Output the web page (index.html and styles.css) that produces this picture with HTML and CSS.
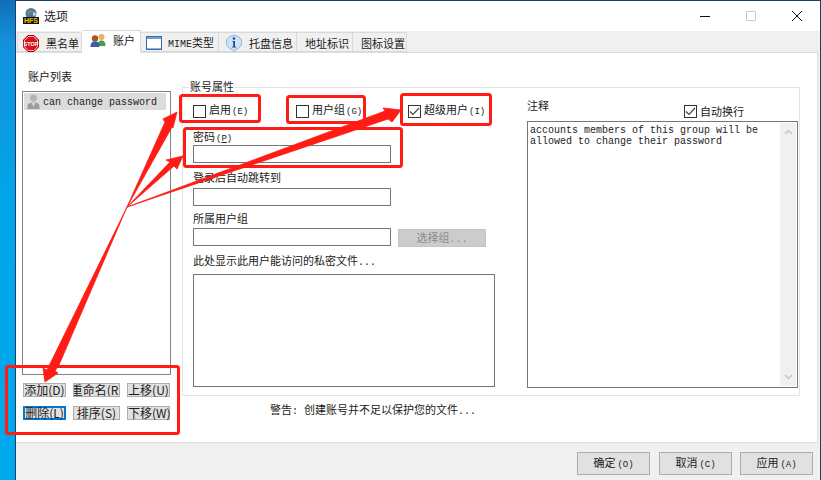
FILE: index.html
```html
<!DOCTYPE html>
<html lang="zh">
<head>
<meta charset="utf-8">
<title>选项</title>
<link rel="stylesheet" href="styles.css">
</head>
<body>
<div class="desktop">
  <div class="wallpaper"></div>
  <div class="window">
    <header class="titlebar">
      <svg class="logo" viewBox="0 0 16 16" width="16" height="16">
        <circle cx="8" cy="5.5" r="5.5" fill="#4a76a8"/>
        <path d="M3 5c2-3 5-4 7-3 1 2-2 2-3 4-2 1-3 0-4-1z" fill="#7d8b5c"/>
        <path d="M10 4c2 0 3 1 3 3l-3 1z" fill="#d8d8d8"/>
        <rect x="0" y="9" width="16" height="7" fill="#111"/>
        <text x="8" y="15" class="logo-text">HFS</text>
      </svg>
      <span class="title">选项</span>
      <div class="controls">
        <svg width="12" height="12" viewBox="0 0 12 12"><path d="M1 6.5h10" stroke="#111" fill="none"/></svg>
        <svg width="12" height="12" viewBox="0 0 12 12"><path d="M1.5 1.5h9v9h-9z" stroke="#ccc" fill="none"/></svg>
        <svg width="12" height="12" viewBox="0 0 12 12"><path d="M1 1l10 10M11 1L1 11" stroke="#111" fill="none"/></svg>
      </div>
    </header>

    <nav class="tabs">
      <div class="tab t-block">
        <svg width="16" height="17" viewBox="0 0 16 17"><path d="M5 .5h6L15.5 5v7L11 16.500H5L.5 12V5z" fill="#d9101c" stroke="#a00"/><path d="M5.400 1.500h5.200l3.900 3.900v6.200l-3.900 3.900H5.400l-3.900-3.900V5.400z" fill="none" stroke="#fff" stroke-opacity=".7"/><text x="8" y="11" class="stop-text">STOP</text></svg>
        <span>黑名单</span>
      </div>
      <div class="tab tab-active t-acct">
        <svg width="16" height="13" viewBox="0 0 16 13"><circle cx="11.500" cy="3" r="3" fill="#e8b060"/><path d="M7.500 12c0-4 1.500-5.500 4-5.500s4 1.500 4 5.500z" fill="#4a9a50"/><circle cx="5" cy="4.500" r="3.200" fill="#a05828"/><path d="M.5 13c0-4 1.500-5.500 4.500-5.500s4.500 1.500 4.500 5.500z" fill="#3a5ca8"/></svg>
        <span>账户</span>
      </div>
      <div class="tab t-mime">
        <svg width="16" height="14" viewBox="0 0 16 14"><rect x=".5" y=".5" width="15" height="13" fill="#fff" stroke="#2f6cb8"/><rect x="1" y="1" width="14" height="2" fill="#6f9fd8"/><path d="M1 12.500h14" stroke="#8fb4e0"/></svg>
        <span class="mime"><i class="mono">MIME</i>类型</span>
      </div>
      <div class="tab t-tray">
        <svg width="16" height="17" viewBox="0 0 16 17"><path d="M8 .5a7.500 7 0 0 1 2 13.800L8 16.500 6 14.300A7.500 7 0 0 1 8 .5z" fill="#cfe3f6" stroke="#8db2d8"/><circle cx="8" cy="3.500" r="1.300" fill="#1c4f9c"/><path d="M6.500 6h2.500v5.500h1v1H6.200v-1h1V7H6.500z" fill="#1c4f9c"/></svg>
        <span>托盘信息</span>
      </div>
      <div class="tab t-addr"><span>地址标识</span></div>
      <div class="tab t-icon"><span>图标设置</span></div>
    </nav>

    <main class="panel">
      <section class="accounts">
        <div class="label">账户列表</div>
        <div class="list">
          <div class="list-row">
            <svg width="13" height="15" viewBox="0 0 13 15"><circle cx="6.500" cy="4" r="3.500" fill="#b5b5b5"/><path d="M.5 15v-3c0-2.500 3-3.500 6-3.500s6 1 6 3.500v3z" fill="#9c9c9c"/><path d="M5 9l1.500 4L8 9z" fill="#e4e4e4"/></svg>
            <span class="mono row-text">can change password</span>
          </div>
        </div>
        <div class="list-buttons">
          <button class="sm">添加(D)</button>
          <button class="sm clip">重命名(R)</button>
          <button class="sm">上移(U)</button>
          <button class="sm sm-focus">删除(L)</button>
          <button class="sm">排序(S)</button>
          <button class="sm">下移(W)</button>
        </div>
      </section>

      <section class="props">
        <div class="group">
          <div class="legend">账号属性</div>
          <div class="group-body">
            <div class="form">
              <div class="checks">
                <label class="check c1"><span class="box"></span><span>启用<i class="mono-s">(E)</i></span></label>
                <label class="check c2"><span class="box"></span><span>用户组<i class="mono-s">(G)</i></span></label>
                <label class="check"><span class="box"><svg width="11" height="11" viewBox="0 0 11 11"><path d="M1 5.500l3 3L10 2" fill="none" stroke="#444" stroke-width="1.200"/></svg></span><span>超级用户<i class="mono-s">(I)</i></span></label>
              </div>
              <div class="label f-pass">密码<i class="mono-s">(<u>P</u>)</i></div>
              <div class="input"></div>
              <div class="label f-login">登录后自动跳转到</div>
              <div class="input"></div>
              <div class="label f-group">所属用户组</div>
              <div class="input-row">
                <div class="input"></div>
                <button class="choose">选择组<i class="mono">...</i></button>
              </div>
              <div class="label f-files">此处显示此用户能访问的私密文件<i class="mono dots">...</i></div>
              <div class="files"></div>
            </div>
            <div class="notes">
              <div class="notes-head">
                <span class="label">注释</span>
                <label class="check wrap"><span class="box"><svg width="11" height="11" viewBox="0 0 11 11"><path d="M1 5.500l3 3L10 2" fill="none" stroke="#444" stroke-width="1.200"/></svg></span><span>自动换行</span></label>
              </div>
              <div class="textarea">
                <div class="note-text mono">accounts members of this group will be allowed to change their password</div>
                <div class="scroll">
                  <svg width="9" height="6" viewBox="0 0 9 6"><path d="M1 5l3.500-3.500L8 5" fill="none" stroke="#c4c4c4" stroke-width="1.500"/></svg>
                  <svg width="9" height="6" viewBox="0 0 9 6"><path d="M1 1l3.500 3.500L8 1" fill="none" stroke="#c4c4c4" stroke-width="1.500"/></svg>
                </div>
              </div>
            </div>
          </div>
        </div>
        <div class="warning">警告<i class="mono dots">: </i>创建账号并不足以保护您的文件<i class="mono dots">...</i></div>
      </section>
    </main>

    <footer class="footer">
      <button class="btn">确定<i class="mono-s">(O)</i></button>
      <button class="btn">取消<i class="mono-s">(C)</i></button>
      <button class="btn">应用<i class="mono-s">(A)</i></button>
    </footer>
  </div>

  <svg class="marks" width="821" height="480" viewBox="0 0 821 480">
    <g fill="none" stroke="#ff1c14" stroke-width="3">
      <rect x="180.500" y="95.500" width="79" height="26" rx="2"/>
      <rect x="287.500" y="96.500" width="77" height="26" rx="2"/>
      <rect x="401.500" y="94.500" width="89" height="30" rx="2"/>
      <rect x="184.500" y="128.500" width="217" height="38" rx="2"/>
      <rect x="6.500" y="366.500" width="172" height="67" rx="2"/>
    </g>
    <g fill="#ff1c14" stroke="#ff1c14" stroke-width=".8">
      <path d="M127 207L165 122L163 119L177 112L173 128L172 127z"/>
      <path d="M127 207L170 162L166 160L183 156L177 169L174 166z"/>
      <path d="M127 207L385 111L383 108L401 110L392 122L388 119z"/>
      <path d="M127 207L59 365L55 371L58 373L45 382L43 368L47 370z"/>
    </g>
  </svg>
</div>
</body>
</html>
```

FILE: styles.css
```css
* { box-sizing: border-box; }
html, body { margin: 0; padding: 0; }
body {
  width: 821px;
  height: 480px;
  overflow: hidden;
  font: 11px/13px "Noto Sans CJK SC", "Liberation Sans", sans-serif;
  color: #1a1a1a;
}
i { font-style: normal; }
button { font: inherit; color: inherit; padding: 0; }

.desktop { position: relative; display: flex; width: 821px; height: 480px; }
.wallpaper {
  width: 15px;
  background: linear-gradient(#0f6fb8 0, #1490dc 40px, #00a6ea 200px, #00a8ec 100%);
}
.window {
  flex: 1;
  display: flex;
  flex-direction: column;
  border: 1px solid #1b3f66;
  border-bottom: 0;
  background: #f0f0f0;
}

.titlebar { height: 30px; display: flex; align-items: center; background: #fff; padding: 0 0 2px 7px; }
.logo { margin-top: 1px; }
.logo-text { font: bold 7px "Liberation Sans", sans-serif; fill: #f5c800; text-anchor: middle; }
.title { font-size: 12px; margin-left: 5px; }
.controls { margin-left: auto; display: flex; gap: 34px; padding-right: 17px; margin-top: 1px; }

.tabs { height: 21px; display: flex; align-items: flex-end; padding-left: 1px; position: relative; z-index: 1; }
.tab {
  height: 20px;
  padding-top: 2px;
  display: flex;
  align-items: center;
  border: 1px solid #d9d9d9;
  border-left-width: 0;
  background: #f0f0f0;
}
.tab:first-child { border-left-width: 1px; }
.tab-active { height: 23px; margin-bottom: -1px; padding: 0 0 2px; background: #fff; border-bottom-color: #fff; }
.t-block { width: 65px; padding-left: 5px; gap: 7px; }
.t-acct { width: 59px; padding-left: 8px; gap: 7px; }
.t-mime { width: 78px; padding-left: 5px; gap: 6px; }
.t-tray { width: 78px; padding-left: 7px; gap: 7px; }
.t-addr { width: 56px; padding-left: 8px; }
.t-icon { width: 54px; padding-left: 8px; }

.mono { font: 10px/11px "Liberation Mono", monospace; color: #222; }
.mono-s { font: 9px/13px "Liberation Mono", monospace; margin-left: 1px; }
.dots { line-height: 13px; }

.panel {
  height: 391px;
  margin-right: 2px;
  display: flex;
  background: #fff;
  border: 1px solid #dcdcdc;
  border-left: 0;
  padding: 17px 17px 0 6px;
}
.accounts { width: 149px; }
.accounts > .label { padding-left: 6px; height: 14px; }
.list { height: 284px; margin-top: 7px; border: 1px solid #82828a; padding: 1px; }
.list-row { width: 142px; height: 17px; display: flex; align-items: center; gap: 3px; background: #dcdcdc; padding-left: 3px; }
.row-text { padding-top: 2px; }
.list-buttons {
  display: grid;
  grid-template-columns: 43px 47px 43px;
  grid-auto-rows: 14px;
  gap: 9px 7px;
  margin: 8px 0 0 1px;
}
.sm {
  font: 12px/12px "Noto Sans CJK SC", "Liberation Sans", sans-serif;
  border: 1px solid #adadad;
  background: #e1e1e1;
  white-space: nowrap;
  text-align: center;
}
.clip { display: flex; justify-content: center; overflow: hidden; }
.sm-focus { border: 2px solid #0078d7; line-height: 10px; }

.props { flex: 1; margin-left: 11px; display: flex; flex-direction: column; }
.group { height: 309px; margin-top: 17px; border: 1px solid #e3e3e3; padding-left: 10px; }
.legend { width: max-content; margin: -8px 0 0 -4px; padding: 0 1px; background: #fff; height: 14px; }
.group-body { display: flex; }
.form { width: 302px; }
.checks { display: flex; height: 14px; margin-top: 10px; }
.check { display: flex; align-items: center; gap: 3px; }
.c1 { width: 103px; }
.c2 { width: 112px; }
.box { width: 13px; height: 13px; border: 1px solid #333; background: #fff; display: flex; align-items: center; justify-content: center; }
.f-pass { margin-top: 12px; height: 15px; }
.f-login { margin-top: 8px; height: 17px; }
.f-group { margin-top: 6px; height: 16px; }
.f-files { margin-top: 7px; height: 20px; }
.input { width: 198px; height: 18px; border: 1px solid #767676; background: #fff; }
.input-row { display: flex; gap: 7px; }
.choose { width: 88px; height: 18px; margin-top: 1px; border: 1px solid #c4c4c4; background: #ccc; color: #8c8c8c; }
.choose .mono { color: #8c8c8c; }
.files { width: 302px; height: 113px; border: 1px solid #767676; }

.notes { margin-left: 32px; width: 271px; }
.notes-head { display: flex; height: 27px; }
.notes-head > .label { margin-top: 5px; }
.wrap { margin: 10px 0 0 135px; height: 14px; }
.textarea { height: 267px; border: 1px solid #767676; display: flex; padding: 1px; }
.note-text { flex: 1; padding: 2px 10px 0 1px; }
.scroll { width: 16px; background: #f0f0f0; display: flex; flex-direction: column; justify-content: space-between; align-items: center; padding: 6px 0; }

.warning { margin: 7px 0 0 88px; }

.footer { flex: 1; display: flex; gap: 9px; padding: 9px 7px 0 561px; }
.btn { width: 73px; height: 23px; border: 1px solid #adadad; background: #e1e1e1; }
.btn .mono-s { margin-left: 2px; }
.footer .btn:last-child { margin-left: -1px; }

.marks { position: absolute; left: 0; top: 0; pointer-events: none; }
.stop-text { font: bold 5.500px "Liberation Sans", sans-serif; fill: #fff; text-anchor: middle; }
```
